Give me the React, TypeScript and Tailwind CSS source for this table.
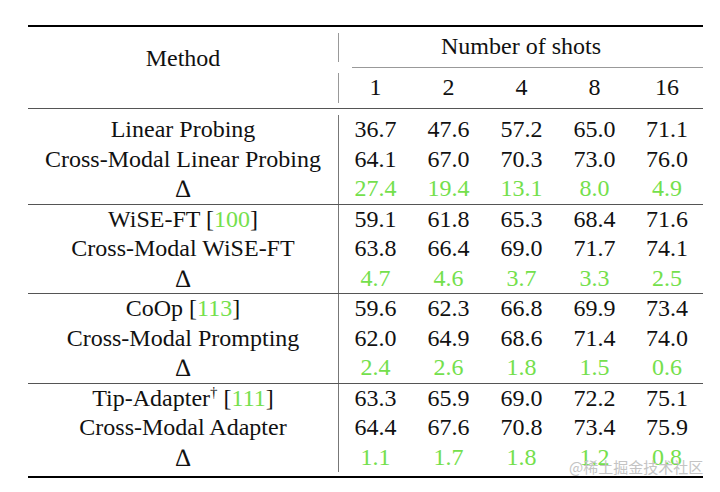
import React from "react";

type Row = { name: React.ReactNode; vals: string[]; delta?: boolean };

const Cite = ({ n }: { n: string }) => (
  <>
    [<span className="text-[#74e04c]">{n}</span>]
  </>
);

const Delta = () => <span className="text-[25px] font-['Liberation_Serif',serif]">∆</span>;

const groups: Row[][] = [
  [
    { name: "Linear Probing", vals: ["36.7", "47.6", "57.2", "65.0", "71.1"] },
    { name: "Cross-Modal Linear Probing", vals: ["64.1", "67.0", "70.3", "73.0", "76.0"] },
    { name: <Delta />, vals: ["27.4", "19.4", "13.1", "8.0", "4.9"], delta: true },
  ],
  [
    { name: <>WiSE-FT <Cite n="100" /></>, vals: ["59.1", "61.8", "65.3", "68.4", "71.6"] },
    { name: "Cross-Modal WiSE-FT", vals: ["63.8", "66.4", "69.0", "71.7", "74.1"] },
    { name: <Delta />, vals: ["4.7", "4.6", "3.7", "3.3", "2.5"], delta: true },
  ],
  [
    { name: <>CoOp <Cite n="113" /></>, vals: ["59.6", "62.3", "66.8", "69.9", "73.4"] },
    { name: "Cross-Modal Prompting", vals: ["62.0", "64.9", "68.6", "71.4", "74.0"] },
    { name: <Delta />, vals: ["2.4", "2.6", "1.8", "1.5", "0.6"], delta: true },
  ],
  [
    {
      name: (
        <>
          Tip-Adapter<span className="relative top-[-9px] text-[15px]">†</span> <Cite n="111" />
        </>
      ),
      vals: ["63.3", "65.9", "69.0", "72.2", "75.1"],
    },
    { name: "Cross-Modal Adapter", vals: ["64.4", "67.6", "70.8", "73.4", "75.9"] },
    { name: <Delta />, vals: ["1.1", "1.7", "1.8", "1.2", "0.8"], delta: true },
  ],
];

const cols = "grid grid-cols-[73px_73px_73px_73px_72px]";

export default function App() {
  return (
    <div className="relative w-[720px] h-[492px] bg-white font-['Liberation_Serif','Times_New_Roman',serif] text-[24px] text-[#111]">
      <div className="pt-[25px] pl-[28px]">
        <div className="w-[675px]">
          {/* top rule */}
          <div className="h-[2px] bg-black" />

          {/* header */}
          <div className="flex">
            <div className="w-[310px] pt-[17px] text-center leading-[29.5px]">Method</div>
            <div className="w-px flex flex-col">
              <div className="h-[40px] pt-[6px] pb-[5px]">
                <div className="h-full bg-[#999]" />
              </div>
              <div className="h-px" />
              <div className="h-[40px] py-[5px]">
                <div className="h-full bg-[#999]" />
              </div>
            </div>
            <div className="w-[364px] flex flex-col">
              <div className="h-[40px] leading-[38px] text-center">Number of shots</div>
              <div className="ml-[13px] h-px bg-[#999]" />
              <div className={`${cols} h-[40px] leading-[39px] text-center`}>
                {["1", "2", "4", "8", "16"].map((s) => (
                  <div key={s}>{s}</div>
                ))}
              </div>
            </div>
          </div>

          {/* body groups */}
          {groups.map((g, gi) => (
            <div key={gi} className="border-t border-[#555]">
              <div className={`flex ${gi === 0 ? "pt-[6px]" : ""} ${gi === groups.length - 1 ? "pb-[4px]" : ""}`}>
                <div className="w-[311px] border-r border-[#777] text-center">
                  {g.map((r, ri) => (
                    <div key={ri} className="h-[29.5px] leading-[29px] whitespace-nowrap">
                      {r.name}
                    </div>
                  ))}
                </div>
                <div className="w-[364px]">
                  {g.map((r, ri) => (
                    <div
                      key={ri}
                      className={`${cols} h-[29.5px] leading-[29px] text-center ${r.delta ? "text-[#74e04c]" : ""}`}
                    >
                      {r.vals.map((v, vi) => (
                        <div key={vi}>{v}</div>
                      ))}
                    </div>
                  ))}
                </div>
              </div>
            </div>
          ))}

          {/* bottom rule */}
          <div className="h-[2px] bg-black" />
        </div>
      </div>

      {/* watermark */}
      <div className="absolute left-[569px] top-[457px] text-[15px] leading-[20px] text-[#c4c4c4] font-['Noto_Sans_CJK_SC',sans-serif] whitespace-nowrap">
        @稀土掘金技术社区
      </div>
    </div>
  );
}
